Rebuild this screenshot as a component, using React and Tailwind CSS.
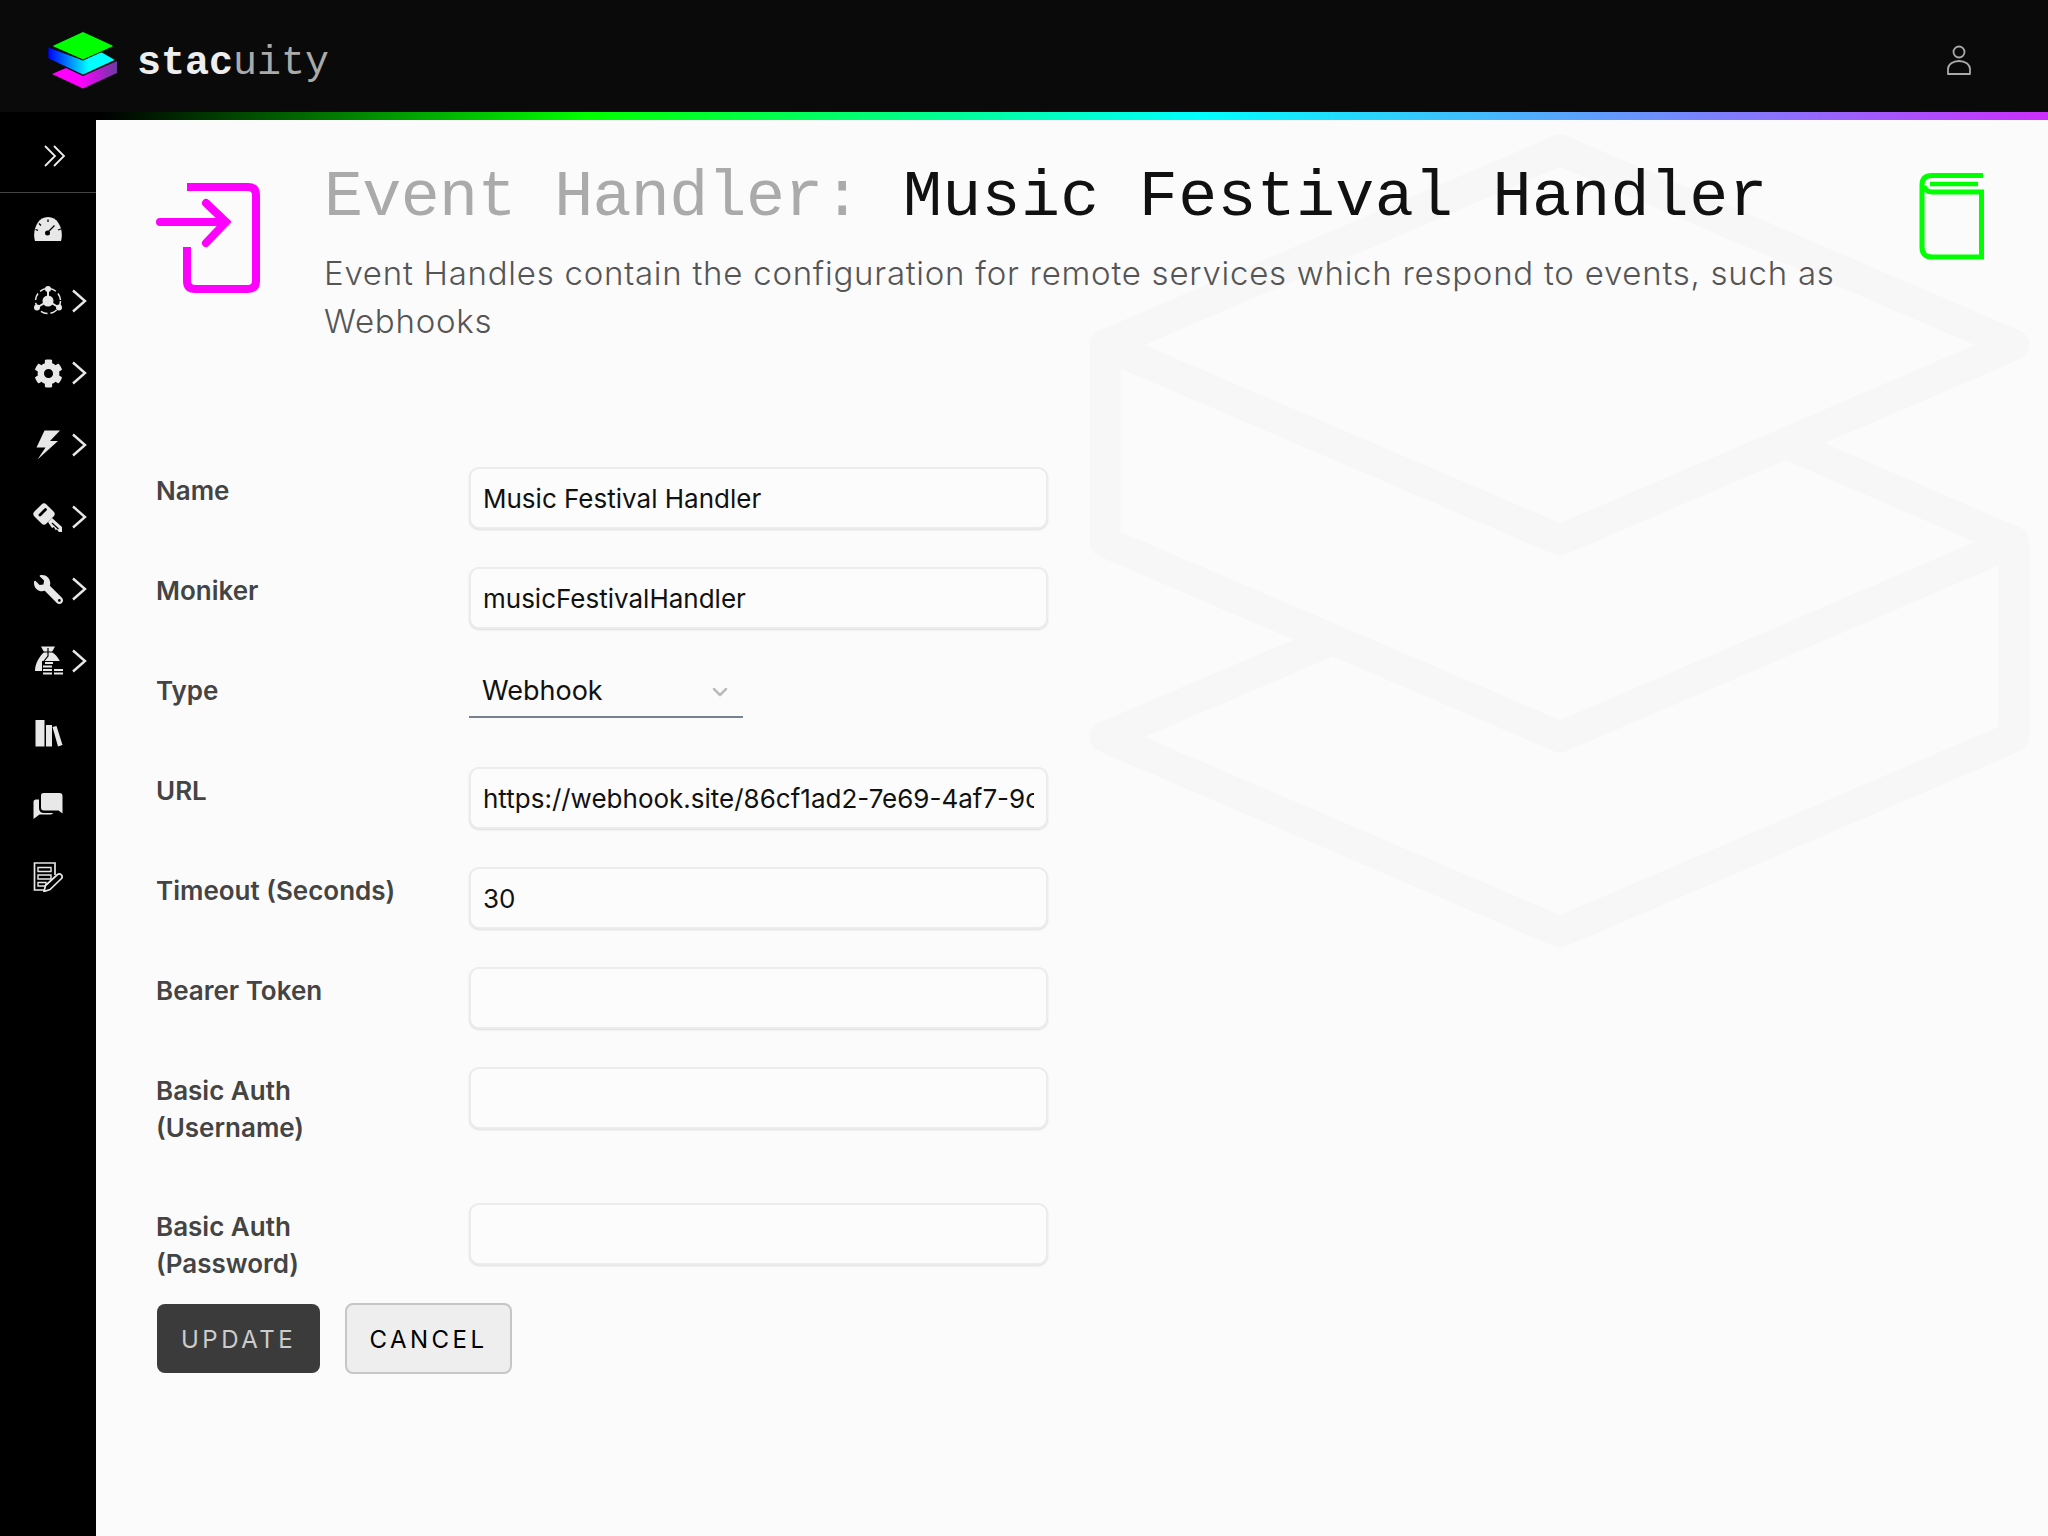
import { FaCog, FaWrench } from "react-icons/fa";
import { ChevronDown } from "lucide-react";

const sans = "font-['Inter','Liberation_Sans',sans-serif]";

function Chevron() {
  return (
    <svg width="16" height="24" viewBox="0 0 16 24" className="ml-[8px]" fill="none" stroke="#e8e8e8" strokeWidth="2.4">
      <path d="M2 1.5 L14 12 L2 22.5" />
    </svg>
  );
}

function GaugeIcon() {
  return (
    <svg width="30" height="30" viewBox="0 0 30 30">
      <path d="M2 27 C-1 17 4 3 15 3 C26 3 31 17 28 27 Z" fill="#e8e8e8" />
      <path d="M15 5.500v2.500M6 9.500l2 2M25 16l3 -1M2.500 15.500l2.500 .8M21.500 11.500 L15 18" stroke="#000" strokeWidth="1.300" fill="none" />
      <circle cx="14.500" cy="19" r="2.500" fill="#000" />
    </svg>
  );
}

function NodesIcon() {
  return (
    <svg width="30" height="30" viewBox="0 0 30 30">
      <circle cx="15" cy="15" r="12.500" fill="none" stroke="#e8e8e8" strokeWidth="1.500" strokeDasharray="7 3" />
      <path d="M15 15V3M15 15 L4 21.500M15 15 L26 21.500" stroke="#e8e8e8" strokeWidth="2" />
      <circle cx="15" cy="15" r="5.500" fill="#e8e8e8" />
      <circle cx="15" cy="3" r="3" fill="#e8e8e8" />
      <circle cx="4" cy="21.500" r="3" fill="#e8e8e8" />
      <circle cx="26" cy="21.500" r="3" fill="#e8e8e8" />
    </svg>
  );
}

function BoltIcon() {
  return (
    <svg width="30" height="30" viewBox="0 0 30 30">
      <path d="M27 0.500 L17 11 H25 L4.500 29.500 L12.500 17.500 H3.500 L11.500 0.500 Z" fill="#e8e8e8" />
    </svg>
  );
}

function KeyIcon() {
  return (
    <svg width="30" height="30" viewBox="0 0 30 30">
      <rect x="2.500" y="3.500" width="17" height="17" rx="3.500" transform="rotate(45 11 12)" fill="#e8e8e8" />
      <path d="M7 13 L12.500 7.500" stroke="#000" strokeWidth="2.800" strokeLinecap="round" />
      <path d="M15 20 L19 16 L29 25 V30 H26 L24 27.500 L22.500 28 L21 25 L19 26 Z" fill="#e8e8e8" />
      <path d="M19 21 L25.500 27" stroke="#000" strokeWidth="1.200" />
    </svg>
  );
}

function BagIcon() {
  return (
    <svg width="30" height="30" viewBox="0 0 30 30">
      <path d="M8 0.500 H22 L19 6 C25 10 29 17 29 25 H2 C2 17 7 10 11 6 Z" fill="#e8e8e8" />
      <path d="M10 6 H20M15 2 L15 10 L11 15" stroke="#000" strokeWidth="1.200" fill="none" />
      <rect x="9" y="15" width="22" height="14" fill="#000" />
      <path d="M12 17h8M10 20.500h9M10 24h9M10 27.500h9M21 24h9M21 27.500h9" stroke="#e8e8e8" strokeWidth="2.200" />
    </svg>
  );
}

function BooksIcon() {
  return (
    <svg width="30" height="30" viewBox="0 0 30 30">
      <path d="M2.500 2 H11.500 V28.500 H2.500 Z M13 7 H19 V28.500 H13 Z M19.500 9 L23.500 8 L29.500 27 L25 28.500 Z" fill="#e8e8e8" />
    </svg>
  );
}

function ChatIcon() {
  return (
    <svg width="30" height="30" viewBox="0 0 30 30">
      <path d="M0.500 12 Q0.500 9.500 3 9.500 H6 V18 Q6 23 11 23 H20 Q19.500 24.500 17 24.500 H6.500 L0.500 29 Z" fill="#e8e8e8" />
      <path d="M10.500 3 H26.500 Q29.500 3 29.500 6 V23.500 L25.500 20.500 H11 Q8 20.500 8 17.500 V5.500 Q8 3 10.500 3 Z" fill="#e8e8e8" />
    </svg>
  );
}

function NotesIcon() {
  return (
    <svg width="30" height="30" viewBox="0 0 30 30">
      <path d="M15 28 H1.500 V1 H22 V13" fill="none" stroke="#e8e8e8" strokeWidth="1.700" />
      <path d="M5 5.500 H18 V9.500 H5 Z M5 13 H18 V17 H5 Z M5 20.500 H13 V24 H5 Z" fill="none" stroke="#e8e8e8" strokeWidth="1.400" />
      <path d="M11 29.500 L12.500 23.500 L24.500 12.500 Q26.500 11 28.500 13 Q30 15 28.500 16.500 L17 27.500 Z" fill="#000" stroke="#e8e8e8" strokeWidth="1.700" />
    </svg>
  );
}

const navItems = [
  { icon: <GaugeIcon />, more: false },
  { icon: <NodesIcon />, more: true },
  { icon: <FaCog size={29} className="mx-[0.5px] text-[#e8e8e8]" />, more: true },
  { icon: <BoltIcon />, more: true },
  { icon: <KeyIcon />, more: true },
  { icon: <FaWrench size={29} className="mx-[0.5px] -scale-x-100 text-[#e8e8e8]" />, more: true },
  { icon: <BagIcon />, more: true },
  { icon: <BooksIcon />, more: false },
  { icon: <ChatIcon />, more: false },
  { icon: <NotesIcon />, more: false },
];

function Logo() {
  return (
    <svg width="72" height="62" viewBox="46 29 72 62" className="shrink-0">
      <defs>
        <linearGradient id="stackMid" x1="0" x2="1" y1="0" y2="0">
          <stop offset="0" stopColor="#0000ff" />
          <stop offset="0.6" stopColor="#00ffff" />
        </linearGradient>
        <linearGradient id="stackLow" x1="0" x2="1" y1="0" y2="0">
          <stop offset="0.45" stopColor="#ff00ff" />
          <stop offset="1" stopColor="#6b3aa0" />
        </linearGradient>
      </defs>
      <path d="M52 74 L66 68 L83 76 L117 61 V73 L83 88.500 Z" fill="url(#stackLow)" />
      <path d="M48 47 L83 60 L100 51 L115.500 60 L83 75 L48 58.500 Z" fill="url(#stackMid)" stroke="#0a0a0a" strokeWidth="0.800" />
      <path d="M83 31.500 L114.500 46 L83 60 L51.500 46 Z" fill="#00ff00" stroke="#0a0a0a" strokeWidth="1" />
    </svg>
  );
}

function Watermark() {
  return (
    <svg
      width="968"
      height="860"
      viewBox="1080 120 968 860"
      fill="none"
      stroke="#f7f7f7"
      strokeWidth="31"
      strokeLinejoin="round"
      className="absolute left-[984px] top-0"
    >
      <path d="M1560 150 L2014 345 L1560 540 L1105 345 Z" />
      <path d="M1105 345 V542 L1560 737 L2014 542" />
      <path d="M1785 443 L2014 542 V737 L1560 932 L1105 737 L1332 640" />
    </svg>
  );
}

function Field({ label, value, rowClass = "h-[100px]" }) {
  return (
    <div className={`flex ${rowClass}`}>
      <label className="w-[313px] shrink-0 pt-[6px] text-[26px] leading-[36.500px] font-semibold text-[#444]">
        {label}
      </label>
      <input
        readOnly
        value={value}
        className="h-[62px] w-[579px] rounded-[10px] border-2 border-[#ececec] bg-[#fcfcfc] px-[12px] text-[26px] text-[#111] shadow-[0_1px_2px_rgba(0,0,0,0.12)] outline-none"
      />
    </div>
  );
}

export default function App() {
  return (
    <div className={`flex h-screen flex-col overflow-hidden bg-[#fbfbfb] ${sans}`}>
      <header className="flex h-[112px] shrink-0 items-center justify-between bg-[#0a0a0a] pl-[46px] pr-[75px] pt-[8px]">
        <div className="flex items-center gap-[19px]">
          <Logo />
          <span className="mt-[8px] font-['Liberation_Mono',monospace] text-[40px] leading-none text-[#aaa]">
            <span className="font-bold text-[#eee]">stac</span>uity
          </span>
        </div>
        <svg width="28" height="32" viewBox="0 0 28 32" fill="none" stroke="#aaa" strokeWidth="1.800">
          <circle cx="14" cy="8" r="5.500" />
          <path d="M3 30 V25 A11 8 0 0 1 25 25 V30 Z" strokeLinejoin="round" />
        </svg>
      </header>
      <div className="h-[8px] shrink-0 bg-[linear-gradient(90deg,#000_5%,#00ff00_28.700%,#00ffff_58.600%,#cc2eff_100%)]" />

      <div className="flex min-h-0 flex-1">
        <aside className="w-[96px] shrink-0 bg-black">
          <div className="flex h-[73px] items-center justify-center border-b border-[#444] pl-[13px]">
            <svg width="24" height="24" viewBox="0 0 24 24" fill="none" stroke="#eee" strokeWidth="1.800">
              <path d="M2 2 L12 12 L2 22M11 2 L21 12 L11 22" />
            </svg>
          </div>
          <nav>
            {navItems.map((item, i) => (
              <div key={i} className="flex h-[72px] items-center pl-[33px]">
                {item.icon}
                {item.more && <Chevron />}
              </div>
            ))}
          </nav>
        </aside>

        <main className="relative flex-1 overflow-hidden bg-[#fbfbfb]">
          <Watermark />
          <div className="relative pl-[60px] pr-[63px] pt-[40px]">
            <div className="flex">
              <svg width="108" height="112" viewBox="155 182 108 112" fill="none" stroke="#ff00ff" strokeWidth="8" strokeLinecap="round" className="-ml-[1px] mt-[22px] shrink-0">
                <path d="M187 187 H248 Q256 187 256 195 V281 Q256 289 248 289 H195 Q187 289 187 281 V247" strokeLinecap="butt" />
                <path d="M160 222 H226 M206 203 L226 222 L206 243" />
              </svg>
              <div className="ml-[61px] w-[1530px]">
                <h1 className="font-['Liberation_Mono',monospace] text-[65px] leading-[76px] font-normal text-[#111]">
                  <span className="tracking-[-0.65px] text-[#aaa]">Event Handler:</span>
                  <span className="ml-[42px] tracking-[0.3px]">Music Festival Handler</span>
                </h1>
                <p className="mt-[13px] text-[33px] leading-[48px] font-light tracking-[0.75px] text-[#555]">
                  Event Handles contain the configuration for remote services which respond to events, such as Webhooks
                </p>
              </div>
              <svg width="66" height="88" viewBox="0 0 66 88" fill="none" stroke="#00ff00" strokeWidth="5" className="ml-auto mt-[12px] shrink-0">
                <path d="M64 3.500 H13 Q3 3.500 3 13 V75 Q3 85 13 85 H62.500 V20 H13 Q7 20 5 14" />
                <path d="M11 12 H59" strokeWidth="4.500" />
              </svg>
            </div>

            <form className="mt-[122px]" onSubmit={(e) => e.preventDefault()}>
              <Field label="Name" value="Music Festival Handler" />
              <Field label="Moniker" value="musicFestivalHandler" />
              <div className="flex h-[100px]">
                <label className="w-[313px] shrink-0 pt-[6px] text-[26px] leading-[36.500px] font-semibold text-[#444]">Type</label>
                <div className="flex h-[51px] w-[274px] items-center justify-between border-b-2 border-[#76828e] pl-[13px] pr-[11px] text-[27px] text-[#111]">
                  Webhook
                  <ChevronDown size={24} strokeWidth={2.5} className="text-[#bbb]" />
                </div>
              </div>
              <Field label="URL" value="https://webhook.site/86cf1ad2-7e69-4af7-9c3d-52b1e08ac117" />
              <Field label="Timeout (Seconds)" value="30" />
              <Field label="Bearer Token" value="" />
              <Field label={<>Basic Auth<br />(Username)</>} value="" rowClass="h-[136px]" />
              <Field label={<>Basic Auth<br />(Password)</>} value="" />
              <div className="flex items-center gap-[25px]">
                <button type="button" className="ml-[1px] h-[69px] w-[163px] rounded-[8px] bg-[#3b3b3b] pt-[2px] text-[24px] tracking-[3.500px] text-[#ccc]">
                  UPDATE
                </button>
                <button type="button" className="h-[71px] w-[167px] rounded-[8px] border-2 border-[#c6c6c6] bg-[#eee] pt-[2px] text-[24px] tracking-[3.500px] text-black">
                  CANCEL
                </button>
              </div>
            </form>
          </div>
        </main>
      </div>
    </div>
  );
}
